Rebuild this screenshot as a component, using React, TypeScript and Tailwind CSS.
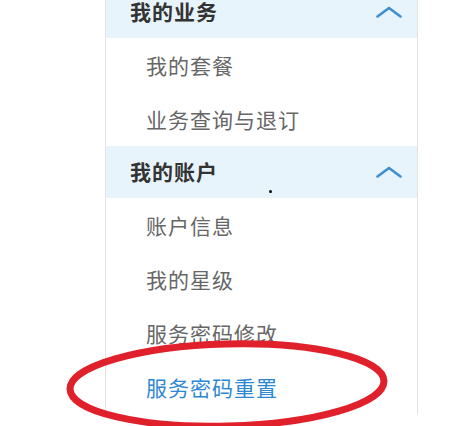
import React from "react";

function Chevron() {
  return (
    <svg width="28" height="12" viewBox="0 0 28 12" className="block">
      <path d="M2.5 10.5 L14 2 L25.5 10.5" fill="none" stroke="#3d8fd1" strokeWidth="2.6" strokeLinecap="round" strokeLinejoin="round" />
    </svg>
  );
}

function Header({ title }: { title: string }) {
  return (
    <div className="h-[52px] bg-[#e8f4fc] flex items-center justify-between pl-[24px] pr-[14px]">
      <span className="font-bold text-[#333] text-[21px] tracking-[1px]">{title}</span>
      <Chevron />
    </div>
  );
}

function Item({ label, active }: { label: string; active?: boolean }) {
  return (
    <div className="h-[54px] flex items-center pl-[40px] pt-[2px]">
      <span className={`text-[21px] tracking-[1px] ${active ? "text-[#2d87d3]" : "text-[#666]"}`}>{label}</span>
    </div>
  );
}

export default function App() {
  return (
    <div
      className="relative w-[468px] h-[426px] overflow-hidden bg-white"
      style={{ fontFamily: '"Noto Sans CJK SC", "Noto Sans", sans-serif' }}
    >
      <div className="ml-[105px] w-[313px] border-x border-[#e3e3e3] -mt-[14px] flex flex-col">
        <Header title="我的业务" />
        <Item label="我的套餐" />
        <Item label="业务查询与退订" />
        <Header title="我的账户" />
        <Item label="账户信息" />
        <Item label="我的星级" />
        <Item label="服务密码修改" />
        <Item label="服务密码重置" active />
      </div>
      <div className="absolute left-[269px] top-[190px] w-[3px] h-[3px] rounded-full bg-black" />
      <svg className="absolute left-0 top-0 pointer-events-none" width="468" height="426" viewBox="0 0 468 426">
        <ellipse cx="227" cy="385" rx="157" ry="41" fill="none" stroke="#e0212b" strokeWidth="7" transform="rotate(-1.5 227 385)" />
      </svg>
    </div>
  );
}
